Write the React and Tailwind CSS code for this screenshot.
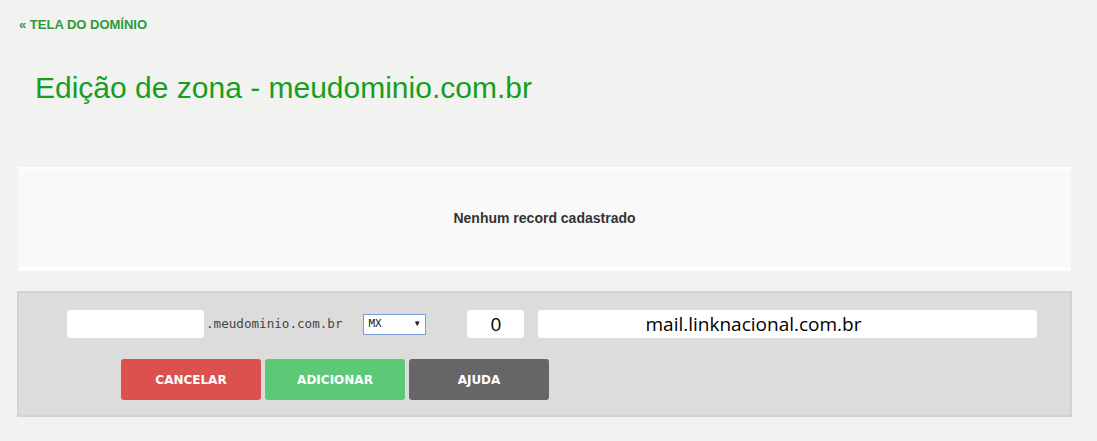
export default function App() {
  return (
    <div className="min-h-[441px] w-full bg-[#f2f2f0] font-['Liberation_Sans',Arial,sans-serif]">
      <div className="pl-[19px] pt-[12px]">
        <a className="text-[13px] font-bold leading-[14px] text-[#2a9a3a] no-underline">« TELA DO DOMÍNIO</a>
      </div>
      <h1 className="pl-[35px] pt-[35px] text-[30px] leading-[34px] text-[#14a01e]">
        Edição de zona - meudominio.com.br
      </h1>
      <div className="ml-[18px] mr-[26px] mt-[62px] flex h-[104px] items-center justify-center border-t-2 border-b-4 border-white bg-[#f9f9f9]">
        <span className="text-[14px] font-bold text-[#333]">Nenhum record cadastrado</span>
      </div>
      <div className="ml-[17px] mr-[25px] mt-[20px] h-[126px] border-2 border-[#d2d2d2] bg-[#dcdcdc]">
        <div className="flex items-center pl-[48px] pt-[17px]">
          <div className="h-[28px] w-[137px] rounded-[3px] bg-white" />
          <span className="ml-[2px] font-['DejaVu_Sans_Mono',monospace] text-[12.6px] text-[#444]">.meudominio.com.br</span>
          <div className="ml-[21px] flex h-[21px] w-[63px] items-center justify-between border border-[#7a9cd6] bg-white pl-[4px] pr-[6px] font-['DejaVu_Sans_Mono',monospace] text-[11px] text-[#222]">
            <span>MX</span>
            <span className="text-[8px]">▼</span>
          </div>
          <div className="ml-[41px] flex h-[28px] w-[57px] items-center justify-center rounded-[3px] bg-white font-['Open_Sans',sans-serif] text-[19px] text-black">0</div>
          <div className="ml-[14px] flex h-[28px] w-[499px] items-center rounded-[3px] bg-white pl-[107px] font-['Open_Sans',sans-serif] text-[19px] text-black">
            mail.linknacional.com.br
          </div>
        </div>
        <div className="flex gap-[4px] pl-[102px] pt-[21px]">
          <button className="h-[41px] w-[140px] rounded-[3px] bg-[#dc514e] font-['DejaVu_Sans',sans-serif] text-[12px] font-bold text-white">CANCELAR</button>
          <button className="h-[41px] w-[140px] rounded-[3px] bg-[#5cc977] font-['DejaVu_Sans',sans-serif] text-[12px] font-bold text-white">ADICIONAR</button>
          <button className="h-[41px] w-[140px] rounded-[3px] bg-[#666666] font-['DejaVu_Sans',sans-serif] text-[12px] font-bold text-white">AJUDA</button>
        </div>
      </div>
    </div>
  );
}
